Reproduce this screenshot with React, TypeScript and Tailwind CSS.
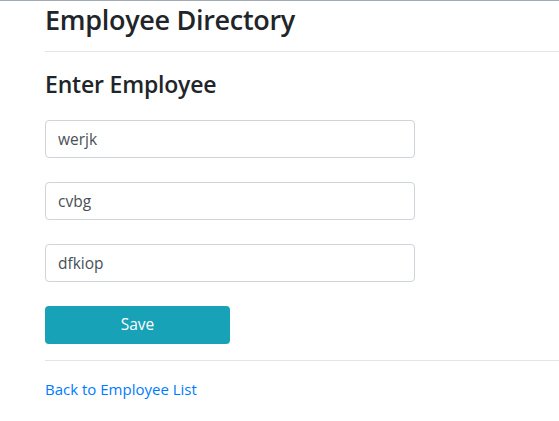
import React from 'react';

const fields = ['werjk', 'cvbg', 'dfkiop'];

export default function App() {
  return (
    <div
      className="min-h-[421px] w-full overflow-hidden border-t border-[#a0aab4] bg-white text-[#212529]"
      style={{ fontFamily: '"Open Sans", "Noto Sans", sans-serif' }}
    >
      <div className="pl-[45px]">
        <h1 className="mt-[2px] text-[27px] font-semibold leading-[34px] tracking-[-0.3px]">Employee Directory</h1>
        <hr className="mt-[14px] border-t border-[#e5e5e5]" />

        <h4 className="mt-[18px] text-[23px] font-semibold leading-[29px] tracking-[-0.2px]">Enter Employee</h4>

        <form className="mt-[21px] flex flex-col gap-[24px]">
          {fields.map((v) => (
            <input
              key={v}
              defaultValue={v}
              className="h-[38px] w-[370px] rounded-[4px] border border-[#ced4da] px-3 text-[15.5px] text-[#495057] outline-none"
            />
          ))}
          <button
            type="button"
            className="h-[38px] w-[185px] rounded-[4px] bg-[#17a2b8] text-[15.5px] text-white"
          >
            Save
          </button>
        </form>

        <hr className="mt-[16px] border-t border-[#e5e5e5]" />
        <a href="#" className="mt-[16px] block text-[15px] leading-[24px] text-[#007bff]">
          Back to Employee List
        </a>
      </div>
    </div>
  );
}
